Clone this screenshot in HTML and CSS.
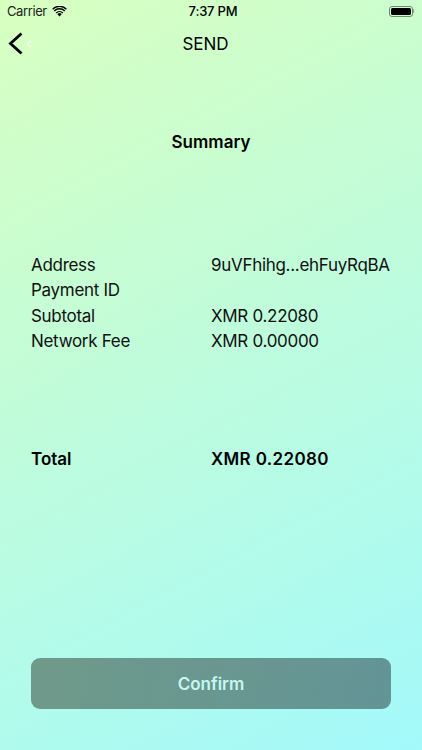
FILE: index.html
```html
<!DOCTYPE html>
<html lang="en">
<head>
    <meta charset="UTF-8">
    <meta name="viewport" content="width=device-width, initial-scale=1.0">
    <title>Send</title>
    <link rel="stylesheet" href="styles.css">
</head>
<body>
    <div class="screen">
        <div class="status">
            <div class="status-left">
                <span class="carrier">Carrier</span>
                <svg class="wifi" width="15" height="11" viewBox="0 0 16 12">
                    <path d="M8 11.5 5.6 8.900a3.400 3.400 0 0 1 4.800 0z" fill="#000"/>
                    <path d="M3.900 7.100a5.800 5.800 0 0 1 8.200 0l-1 1.100a4.400 4.400 0 0 0-6.200 0z" fill="#000"/>
                    <path d="M1.700 4.900a8.900 8.900 0 0 1 12.600 0l-1 1.100a7.500 7.500 0 0 0-10.600 0z" fill="#000"/>
                    <path d="M0 2.900a11.300 11.300 0 0 1 16 0l-1 1.100a9.900 9.900 0 0 0-14 0z" fill="#000"/>
                </svg>
            </div>
            <div class="clock">7:37 PM</div>
            <div class="status-right">
                <div class="battery"><div class="battery-fill"></div></div>
                <div class="battery-tip"></div>
            </div>
        </div>
        <div class="nav">
            <svg class="back" width="28" height="24" viewBox="0 0 28 24">
                <path d="M15.500 1.500 4.500 11.500l11 10" fill="none" stroke="#000" stroke-width="2.800"/>
                <path d="M25 9 21 12l4 3" fill="none" stroke="#fff" stroke-opacity="0.7" stroke-width="1.200"/>
            </svg>
            <h1 class="title">SEND</h1>
        </div>
        <h2 class="summary">Summary</h2>
        <div class="rows">
            <div class="row"><span class="label">Address</span><span>9uVFhihg...ehFuyRqBA</span></div>
            <div class="row"><span class="label">Payment ID</span><span></span></div>
            <div class="row"><span class="label">Subtotal</span><span>XMR 0.22080</span></div>
            <div class="row"><span class="label">Network Fee</span><span>XMR 0.00000</span></div>
        </div>
        <div class="row total"><span class="label">Total</span><span class="total-value">XMR 0.22080</span></div>
        <div class="spacer"></div>
        <button class="confirm">Confirm</button>
    </div>
</body>
</html>
```
FILE: styles.css
```css
*{
    box-sizing: border-box;
}
html,body{
    margin: 0;
    padding: 0;
}
body{
    width: 422px;
    height: 750px;
    overflow: hidden;
    font-family: Inter, "Liberation Sans", sans-serif;
    color: #000;
}
.screen{
    width: 422px;
    height: 750px;
    display: flex;
    flex-direction: column;
    background: linear-gradient(152deg, #d8ffc0 0%, #a3f9fb 100%);
}
.status{
    height: 22px;
    padding: 0 7px;
    display: flex;
    align-items: center;
    justify-content: space-between;
    font-size: 13px;
}
.status-left{
    width: 124px;
    display: flex;
    align-items: center;
    gap: 5px;
    color: #222;
    letter-spacing: -0.4px;
}
.clock{
    font-weight: 500;
    font-size: 13px;
    letter-spacing: -0.2px;
}
.status-right{
    width: 120px;
    display: flex;
    align-items: center;
    justify-content: flex-end;
    padding-right: 1px;
}
.battery{
    width: 24px;
    height: 11px;
    padding: 1px;
    border: 1px solid #6d8c6d;
    border-radius: 3px;
}
.battery-fill{
    height: 100%;
    background-color: #000;
    border-radius: 1.5px;
}
.battery-tip{
    width: 1.500px;
    height: 4px;
    background-color: #8aa58a;
}
.nav{
    height: 42px;
    padding-top: 1px;
    padding-right: 11px;
    position: relative;
    display: flex;
    align-items: center;
    justify-content: center;
}
.back{
    position: absolute;
    left: 6px;
    top: 10px;
}
.title{
    margin: 0;
    font-size: 17px;
    font-weight: 400;
}
.summary{
    margin: 66px 0 0;
    text-align: center;
    font-size: 17px;
    line-height: 24px;
    font-weight: 600;
}
.rows{
    margin-top: 98px;
    display: flex;
    flex-direction: column;
}
.row{
    height: 25.500px;
    padding-left: 31px;
    display: flex;
    align-items: center;
    font-size: 17px;
    letter-spacing: -0.3px;
    color: #111;
}
.label{
    width: 180px;
}
.total{
    margin-top: 92px;
    height: 26px;
    font-weight: 600;
    letter-spacing: 0;
    color: #000;
}
.total-value{
    letter-spacing: 0.35px;
}
.spacer{
    flex: 1;
}
.confirm{
    margin: 0 31px 41px;
    height: 51px;
    border: none;
    border-radius: 9px;
    background: linear-gradient(100deg, #6f9a8a 0%, #639496 100%);
    color: #c6f7ee;
    font-family: inherit;
    font-size: 17px;
    font-weight: 600;
}
```
